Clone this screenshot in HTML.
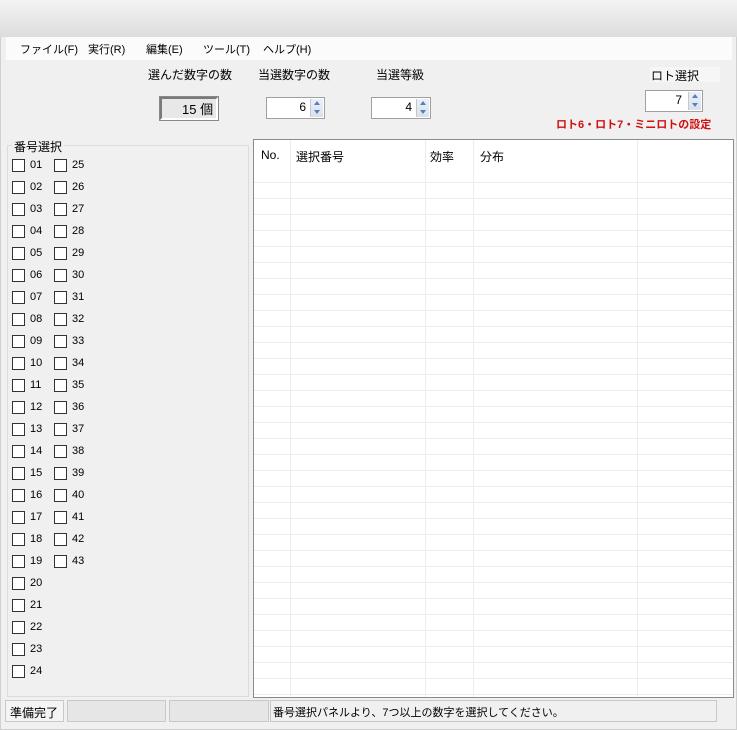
<!DOCTYPE html>
<html><head><meta charset="utf-8"><style>
*{margin:0;padding:0;box-sizing:border-box}
body{width:737px;height:730px;background:#fff;font-family:"Liberation Sans","Noto Sans CJK JP",sans-serif;font-size:12px;color:#000;position:relative;overflow:hidden}
.a{position:absolute}
.win{left:0;top:0;width:737px;height:730px;background:#f0f0f0;border:1px solid #d0d0d0}
.title{left:0;top:0;width:737px;height:37px;background:linear-gradient(#f4f4f4,#dcdcdc)}
.menu{left:6px;top:37px;width:726px;height:23px;background:#fbfbfb}
.menu span{position:absolute;top:4px;font-size:11px}
.box{background:#fff;border:1px solid #a0a0a0}
.spin{width:13px;height:18px;right:1px;top:1px;background:linear-gradient(#eaf0f8,#d8e2ee);border-left:1px solid #c8c8c8}
.spin:before{content:"";position:absolute;left:3px;top:2px;border:3px solid transparent;border-bottom:4px solid #5a7fb8;border-top:0}
.spin:after{content:"";position:absolute;left:3px;top:11px;border:3px solid transparent;border-top:4px solid #5a7fb8;border-bottom:0}
.cb{width:13px;height:13px;border:1px solid #333;background:#fff}
.lb{font-size:11px;font-family:"Liberation Sans Narrow","Liberation Sans",sans-serif}
.grid{left:253px;top:139px;width:481px;height:559px;background:#fff;border:1px solid #8a8a8a;
background-image:repeating-linear-gradient(to bottom,transparent 0,transparent 15px,#ececec 15px,#ececec 16px);background-position:0 27px;background-repeat:repeat-y;background-size:100% 100%}
.hdr{top:0;height:27px;background:#fff;width:100%}
.vl{top:0;bottom:0;width:1px;background:#ededed}
.st{top:700px;height:22px;border:1px solid #c8c8c8;background:#e6e6e6}
</style></head><body>
<div class="a win"></div>
<div class="a title"></div>
<div class="a menu">
<span style="left:14px">ファイル(F)</span><span style="left:82px">実行(R)</span><span style="left:140px">編集(E)</span><span style="left:197px">ツール(T)</span><span style="left:257px">ヘルプ(H)</span>
</div>
<div class="a" style="left:148px;top:66px">選んだ数字の数</div>
<div class="a" style="left:258px;top:66px">当選数字の数</div>
<div class="a" style="left:376px;top:66px">当選等級</div>
<div class="a" style="left:650px;top:67px;width:70px;height:15px;background:#f6f6f6"></div>
<div class="a" style="left:651px;top:67px">ロト選択</div>
<div class="a" style="left:160px;top:97px;width:58px;height:23px;border:2px solid #7a7a7a;background:#e8e8e8;border-right-color:#fff;border-bottom-color:#fff;outline:1px solid #888"></div>
<div class="a" style="left:182px;top:99px;font-size:13px">15 個</div>
<div class="a box" style="left:266px;top:97px;width:59px;height:22px"><span class="a" style="right:18px;top:2px">6</span><div class="a spin"></div></div>
<div class="a box" style="left:371px;top:97px;width:60px;height:22px"><span class="a" style="right:18px;top:2px">4</span><div class="a spin"></div></div>
<div class="a box" style="left:645px;top:90px;width:58px;height:22px"><span class="a" style="right:20px;top:2px">7</span><div class="a spin"></div></div>
<div class="a" style="left:556px;top:116px;color:#d01010;font-weight:bold;font-size:11px">ロト6・ロト7・ミニロトの設定</div>
<div class="a" style="left:7px;top:145px;width:242px;height:552px;border:1px solid #dcdcdc"></div>
<div class="a" style="left:12px;top:138px;background:#f0f0f0;padding:0 2px">番号選択</div>
<div id="cbs"></div>
<div class="a grid">
<div class="a hdr"></div>
<div class="a vl" style="left:36px"></div><div class="a vl" style="left:171px"></div><div class="a vl" style="left:219px"></div><div class="a vl" style="left:383px"></div>
<span class="a" style="left:7px;top:8px">No.</span><span class="a" style="left:42px;top:8px">選択番号</span><span class="a" style="left:176px;top:8px">効率</span><span class="a" style="left:226px;top:8px">分布</span>
</div>
<div class="a" style="left:5px;top:700px;width:59px;height:22px;border:1px solid #c8c8c8;background:#f4f4f4;padding:3px 4px">準備完了</div>
<div class="a st" style="left:67px;width:99px"></div>
<div class="a st" style="left:169px;width:100px"></div>
<div class="a st" style="left:270px;width:447px;padding:3px 2px;font-size:11px;background:#f0f0f0">番号選択パネルより、7つ以上の数字を選択してください。</div>
<script>
var h='';for(var i=1;i<=43;i++){var c=i<=24?0:1,r=i<=24?i-1:i-25;var y=159+r*22,x=c?54:12;
h+='<div class="a cb" style="left:'+x+'px;top:'+y+'px"></div><div class="a lb" style="left:'+(x+18)+'px;top:'+(y+0)+'px">'+(i<10?'0'+i:i)+'</div>';}
document.getElementById('cbs').innerHTML=h;
</script>
</body></html>
